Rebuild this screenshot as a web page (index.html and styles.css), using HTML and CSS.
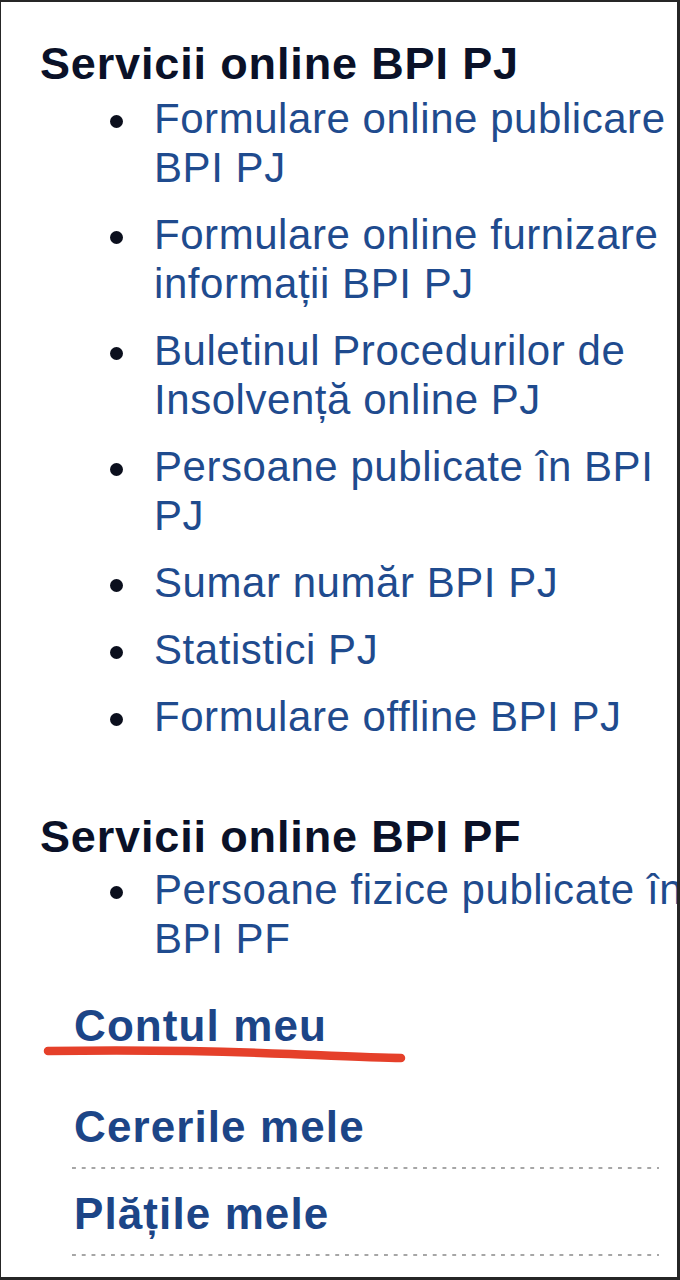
FILE: index.html
```html
<!DOCTYPE html>
<html lang="ro">
<head>
<meta charset="utf-8">
<title>Servicii online BPI</title>
<link rel="stylesheet" href="styles.css">
</head>
<body>
<div class="frame">
  <div class="content">
    <h2 class="section-title">Servicii online BPI PJ</h2>
    <ul class="link-list">
      <li><a href="#">Formulare online publicare BPI PJ</a></li>
      <li><a href="#">Formulare online furnizare informații BPI PJ</a></li>
      <li><a href="#">Buletinul Procedurilor de Insolvență online PJ</a></li>
      <li><a href="#">Persoane publicate în BPI PJ</a></li>
      <li><a href="#">Sumar număr BPI PJ</a></li>
      <li><a href="#">Statistici PJ</a></li>
      <li><a href="#">Formulare offline BPI PJ</a></li>
    </ul>

    <h2 class="section-title section-title--pf">Servicii online BPI PF</h2>
    <ul class="link-list link-list--pf">
      <li><a href="#">Persoane fizice publicate în BPI PF</a></li>
    </ul>

    <div class="account">
      <h3 class="account-title"><a href="#">Contul meu</a></h3>
      <svg class="annotation" width="380" height="30" viewBox="0 0 380 30" aria-hidden="true">
        <path d="M8 10 C 90 9, 180 10, 250 13 S 340 17, 361 17" fill="none" stroke="#e5402a" stroke-width="8.5" stroke-linecap="round"/>
      </svg>
      <ul class="account-menu">
        <li><a href="#">Cererile mele</a></li>
        <li><a href="#">Plățile mele</a></li>
      </ul>
    </div>
  </div>
</div>
</body>
</html>
```

FILE: styles.css
```css
html {
  background: #262626;
}

body {
  margin: 0;
}

.frame {
  position: relative;
  margin: 2px 3px 0 1px;
  height: 1275px;
  background: #ffffff;
  overflow: hidden;
  font-family: "Liberation Sans", Arial, Helvetica, sans-serif;
}

.content {
  width: 661px;
  padding: 37px 0 0 39px;
}

a {
  text-decoration: none;
}

.section-title {
  margin: 0;
  font-size: 45px;
  line-height: 50px;
  font-weight: 700;
  letter-spacing: 0.85px;
  color: #0a1128;
  white-space: nowrap;
}

.section-title--pf {
  margin-top: 71px;
}

.link-list {
  margin: 5px 0 0;
  padding: 0;
  list-style: none;
  display: flex;
  flex-direction: column;
  gap: 18px;
}

.link-list--pf {
  margin-top: 3px;
}

.link-list li {
  display: grid;
  grid-template-columns: 114px 1fr;
  font-size: 42px;
  line-height: 49px;
  letter-spacing: 0.55px;
}

.link-list li::before {
  content: "";
  justify-self: end;
  align-self: start;
  width: 13px;
  height: 13px;
  margin: 21px 31px 0 0;
  border-radius: 50%;
  background: #0b0f1d;
}

.link-list a {
  color: #1f4b8e;
}

.account {
  position: relative;
  width: 587px;
  margin: 38px 0 0 32px;
}

.account-title {
  margin: 0;
  font-size: 44px;
  line-height: 50px;
  font-weight: 700;
  letter-spacing: 1.1px;
  padding-left: 2px;
}

.account-title a,
.account-menu a {
  color: #1c4587;
}

.annotation {
  position: absolute;
  left: -32px;
  top: 40px;
}

.account-menu {
  margin: 31px 0 0;
  padding: 0;
  list-style: none;
}

.account-menu li {
  padding: 20px 0 17px 2px;
  font-size: 44px;
  line-height: 50px;
  font-weight: 700;
  letter-spacing: 1.1px;
  background-image: linear-gradient(to right, #a6a6a6 0 4px, transparent 4px);
  background-size: 9.75px 2px;
  background-repeat: repeat-x;
  background-position: left bottom;
}
```
